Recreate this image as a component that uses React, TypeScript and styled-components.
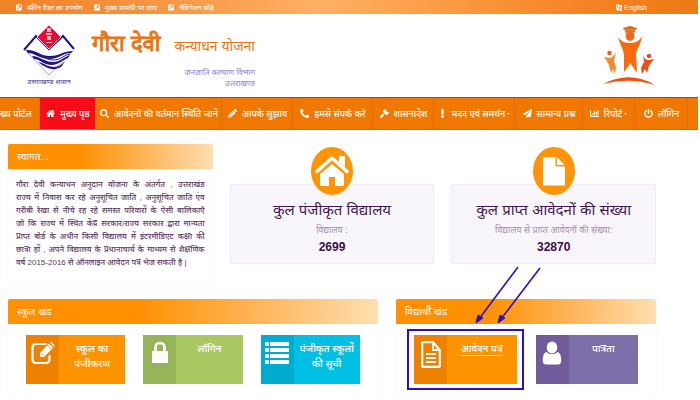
import React from "react";
import styled, { createGlobalStyle, css } from "styled-components";
import {
  FaCaretDown, FaChartBar, FaExclamation, FaExternalLinkSquareAlt, FaGavel, FaHome,
  FaPaperPlane, FaPencilAlt, FaPhoneAlt, FaPowerOff, FaSearch,
} from "react-icons/fa";

const GlobalStyle = createGlobalStyle`
  * { box-sizing: border-box; }
  body {
    margin: 0;
    background: #fff;
    color: #5b3560;
    font-family: "Liberation Sans", "Noto Sans", "Noto Sans Devanagari", sans-serif;
    font-size: 10px;
    overflow-x: hidden;
  }
  a { color: inherit; text-decoration: none; }
  h1, h2, p { margin: 0; padding: 0; font-weight: 400; }
`;

const Page = styled.div`
  margin-right: 2px;
`;

const TopBar = styled.div`
  display: flex;
  justify-content: space-between;
  align-items: center;
  height: 14px;
  padding: 0 51px 0 16px;
  color: #fff;
  font-size: 7px;
  line-height: 13px;
  background: linear-gradient(90deg, #f08228 0%, #f48a34 12%, #fdb064 46%, #fba04a 60%, #f58220 85%, #ee7a14 100%);
`;

const TopLinks = styled.div`
  display: flex;
  gap: 11px;
`;

const TopLink = styled.a`
  display: flex;
  align-items: center;
  gap: 5px;
  white-space: nowrap;
  svg { width: 6px; height: 7px; }
`;

const Language = styled(TopLink)`
  gap: 2px;
`;

const Header = styled.header`
  display: flex;
  align-items: center;
  justify-content: space-between;
  height: 83px;
  padding: 0 42px 0 20px;
`;

const Brand = styled.div`
  display: flex;
  align-items: center;
`;

const Emblem = styled.figure`
  display: flex;
  flex-direction: column;
  align-items: center;
  margin: 0;
  width: 58px;
  svg { width: 54px; height: 53px; }
`;

const EmblemCaption = styled.figcaption`
  color: #45349a;
  font-size: 7px;
  line-height: 10px;
  white-space: nowrap;
`;

const Titles = styled.div`
  display: flex;
  flex-direction: column;
  align-items: flex-end;
  margin-left: 14px;
`;

const Title = styled.h1`
  display: flex;
  align-items: baseline;
  gap: 14px;
  color: #e87516;
  font-size: 22px;
  line-height: 42px;
  white-space: nowrap;
  -webkit-text-stroke: 1px #e87516;
`;

const TitleTail = styled.span`
  font-size: 14px;
  -webkit-text-stroke: 0;
`;

const Department = styled.p`
  color: #8a80d4;
  font-size: 8px;
  line-height: 11px;
  text-align: right;
`;

const SchemeLogo = styled.svg`
  width: 54px;
  height: 62px;
`;

const Nav = styled.nav`
  display: flex;
  height: 33px;
  background: #f07800;
  border-top: 1px solid #d8320c;
  border-bottom: 1px solid #e56208;
`;

const NavItem = styled.a<{ $active?: boolean; $grow: number }>`
  display: flex;
  flex: ${(p) => p.$grow} 0 0;
  min-width: 0;
  align-items: center;
  justify-content: center;
  gap: 5px;
  color: #fff;
  font-size: 9px;
  font-weight: 500;
  white-space: nowrap;
  box-shadow: inset -1px 0 #e26a10;
  svg { flex: none; width: 9px; height: 9px; }
  ${(p) => p.$active && css`background: #f80c18;`}
`;

const PortalItem = styled(NavItem)`
  justify-content: flex-start;
`;

const NavLabel = styled.span`
  display: flex;
  align-items: center;
  gap: 1px;
  svg { width: 5px; height: 5px; }
`;

const NavTail = styled.div`
  flex: 10 0 0;
`;

const Main = styled.main`
  display: flex;
  flex-direction: column;
  gap: 18px;
  padding: 14px 42px 0 8px;
`;

const SummaryRow = styled.div`
  display: grid;
  grid-template-columns: repeat(3, minmax(0, 1fr));
  gap: 17px;
  min-height: 137px;
`;

const SectionRow = styled.div`
  display: grid;
  grid-template-columns: 37fr 26fr;
  gap: 18px;
`;

const Panel = styled.section`
  min-width: 0;
  border-radius: 2px;
  box-shadow: 0 0 1px #ddd;
`;

const PanelTitle = styled.h2`
  height: 25px;
  padding: 0 9px;
  color: #fff;
  font-size: 10px;
  line-height: 25px;
  border-radius: 2px 2px 0 0;
  background: linear-gradient(90deg, #ff9000 0%, #ff9000 35%, #ffb860 70%, #ffdfb0 100%);
`;

const WelcomeText = styled.p`
  padding: 9px 8px 10px;
  font-size: 8px;
  font-weight: 500;
  line-height: 13px;
`;

const Line = styled.span<{ $last?: boolean }>`
  display: block;
  white-space: nowrap;
  text-align: justify;
  text-align-last: ${(p) => (p.$last ? "left" : "justify")};
`;

const Stat = styled.section`
  display: flex;
  flex-direction: column;
  align-items: center;
  align-self: start;
  height: 80px;
  margin-top: 40px;
  background: #f8f6fa;
  border: 1px solid #efedf2;
`;

const StatIcon = styled.span`
  display: flex;
  flex: none;
  align-items: center;
  justify-content: center;
  width: 42px;
  height: 48px;
  margin-top: -38px;
  border-radius: 50%;
  background: #ff9408;
`;

const StatTitle = styled.h2`
  margin-top: 4px;
  color: #42164e;
  font-size: 15px;
  line-height: 22px;
  white-space: nowrap;
`;

const StatNote = styled.p`
  color: #a58fab;
  font-size: 9px;
  line-height: 18px;
  white-space: nowrap;
`;

const StatValue = styled.strong`
  color: #3c1048;
  font-size: 12px;
  line-height: 16px;
`;

const Tiles = styled.div<{ $gap: number }>`
  display: grid;
  grid-auto-flow: column;
  grid-auto-columns: minmax(0, 1fr);
  gap: ${(p) => p.$gap}px;
  padding: 11px 18px 11px;
`;

const TileCell = styled.div`
  position: relative;
`;

const Tile = styled.a<{ $bg: string; $side: string }>`
  display: flex;
  height: 49px;
  color: #fff;
  background: ${(p) => p.$bg};
  > span:first-child { background: ${(p) => p.$side}; }
`;

const TileIcon = styled.span`
  display: flex;
  flex: none;
  justify-content: center;
  align-items: flex-start;
  width: 33px;
  padding-top: 6px;
`;

const TileLabel = styled.span<{ $underline?: boolean }>`
  flex: 1;
  padding-top: 6px;
  font-size: 10px;
  font-weight: 500;
  line-height: 15px;
  text-align: center;
  white-space: nowrap;
  text-decoration: ${(p) => (p.$underline ? "underline" : "none")};
  text-underline-offset: 3px;
`;

const Highlight = styled.span`
  position: absolute;
  inset: -6px -7px;
  border: 2px solid #2a10c8;
  pointer-events: none;
`;

const Arrows = styled.svg`
  position: absolute;
  left: 60px;
  top: -70px;
  width: 70px;
  height: 60px;
  pointer-events: none;
`;

function StateEmblem() {
  return (
    <Emblem>
      <svg viewBox="0 0 54 53" aria-hidden="true">
        <path d="M4 27 27 51 51 27" fill="none" stroke="#aaa0d8" strokeWidth="1" />
        <path d="M2 26 14 12 27 25 41 12 52 25" fill="none" stroke="#231580" strokeWidth="2" />
        <path d="M27 1 39 13 27 25 15 13Z" fill="#e80c34" stroke="#fff" strokeWidth="0.8" />
        <path d="M25 4h4v4h-4zM24 9h6v2h-6zM25 12h4v4h-4zM24 18h6v1h-6z" fill="#ffb5bd" />
        <path d="M4 26C14 25 18 32 28 32 38 32 41 27 51 27L49 29C40 29 38 35 27 35 16 34 13 29 6 29Z" fill="#231580" />
        <path d="M10 32C18 32 22 38 31 38 38 38 42 33 48 31L46 34C40 36 37 41 29 41 20 40 18 35 12 35Z" fill="#231580" />
        <path d="M16 38C23 39 25 43 32 43 37 43 40 40 43 37L40 42C35 46 29 46 24 43 21 42 19 40 16 38Z" fill="#231580" />
        <path d="M14 30C22 32 24 36 31 36 39 36 42 31 48 30" fill="none" stroke="#231580" strokeWidth="1" />
      </svg>
      <EmblemCaption>उत्तराखण्ड शासन</EmblemCaption>
    </Emblem>
  );
}

function GraduatesLogo() {
  return (
    <SchemeLogo viewBox="0 0 54 62" role="img" aria-label="Graduates">
      <path d="M21 3 28 1 35 3 34 5 28 4 22 5Z" fill="#d96a18" />
      <path d="M23 5Q28 3 33 5V8Q28 6 23 8Z" fill="#e07826" />
      <ellipse cx="28" cy="11" rx="4.4" ry="5" fill="#f4681a" />
      <path d="M16 12C19 17 24 18 28 18 32 18 37 17 40 11 39 20 35 23 34 29L35 48 31 42 28 38 26 42 22 47 22 30C21 23 18 20 16 12Z" fill="#fa6a0c" />
      <circle cx="7.5" cy="28" r="2.2" fill="#f05a14" />
      <path d="M2 32 8 33Q12 32 14 27L12 36 14 42 13 49 11 44 9 48 7 40Q5 36 2 32Z" fill="#f58a30" />
      <circle cx="47" cy="31" r="2.2" fill="#e8481c" />
      <path d="M41 29Q42 35 47 35L52 34Q49 38 47 41L45 48 43 44 40 49 39 43 42 37Z" fill="#ec5018" />
      <path d="M1 59Q28 45 53 60 28 52 1 59Z" fill="#f0500f" />
    </SchemeLogo>
  );
}

function LanguageIcon() {
  return (
    <svg viewBox="0 0 12 14" aria-hidden="true">
      <path d="M0 1 6 0V13L0 12ZM7 2h5v12l-5-1Z" fill="#fff" />
      <path d="M1.500 4h3M3 4v2L1.500 9M3 6 4.500 9M8 10l1.500-5L11 10" stroke="#e8842c" fill="none" />
    </svg>
  );
}

function HouseIcon() {
  return (
    <svg width="38" height="36" viewBox="0 0 38 36" aria-hidden="true">
      <path d="M7 21 19 11 31 21V32a1 1 0 0 1-1 1h-8v-9h-6v9H8a1 1 0 0 1-1-1Z" fill="#fff" />
      <path d="M4 19 19 5.500 34 19" fill="none" stroke="#ff9408" strokeWidth="6" />
      <path d="M4 18.500 19 5 34 18.500" fill="none" stroke="#fff" strokeWidth="3.500" strokeLinecap="round" strokeLinejoin="round" />
      <path d="M26 3h6v11l-6-5z" fill="#fff" />
    </svg>
  );
}

function PageIcon() {
  return (
    <svg width="22" height="30" viewBox="0 0 22 30" aria-hidden="true">
      <path d="M0 2a1 1 0 0 1 1-1h11.500v9.500H22v18a1 1 0 0 1-1 1H1a1 1 0 0 1-1-1Z" fill="#fff" />
      <path d="M14 1 21.500 9H14Z" fill="#fff" />
    </svg>
  );
}

function EditIcon() {
  return (
    <svg width="24" height="24" viewBox="0 0 24 24" fill="none" aria-hidden="true">
      <path d="M15 3H5Q1.500 3 1.500 7v11q0 4 3.500 4h10q3.500 0 3.500-4v-3" stroke="#fff" strokeWidth="2.2" strokeLinecap="round" />
      <path d="M9 12 18 2.500 22 7 13 16H9Z" fill="#fff" />
      <path d="M19 1.500Q20 .5 21 1.500L23 4Q24 5 23 6Z" fill="#fff" />
      <path d="M16.500 4 20.500 8.500M10.500 12.500 12.500 14.800" stroke="#ee8200" strokeWidth="0.8" />
    </svg>
  );
}

function LockIcon() {
  return (
    <svg width="16" height="22" viewBox="0 0 16 22" aria-hidden="true">
      <path d="M3.500 11V6.500Q3.500 2 8 2t4.500 4.500V11" fill="none" stroke="#fff" strokeWidth="2.600" />
      <rect y="10" width="16" height="12" rx="1" fill="#fff" />
    </svg>
  );
}

function ListIcon() {
  return (
    <svg width="24" height="23" viewBox="0 0 24 23" fill="#fff" aria-hidden="true">
      {[1, 7, 13, 19].map((y) => (
        <g key={y}>
          <rect y={y} width="4" height="4" rx="1" />
          <rect x="5" y={y} width="19" height="4" rx="0.5" />
        </g>
      ))}
    </svg>
  );
}

function DocumentIcon() {
  return (
    <svg width="20" height="27" viewBox="0 0 20 27" fill="none" stroke="#fff" aria-hidden="true">
      <path d="M2 1.200h10L18.800 9v16q0 .8-.8.8H2q-.8 0-.8-.8V2q0-.8.8-.8Z" strokeWidth="2.200" />
      <path d="M12 1.500V9h6.500" strokeWidth="1.800" />
      <path d="M5 13h10M5 17h10M5 21h10" strokeWidth="2" />
    </svg>
  );
}

function PersonIcon() {
  return (
    <svg width="20" height="24" viewBox="0 0 20 24" fill="#fff" aria-hidden="true">
      <path d="M4.500 11C1 12 .8 17 .8 20c0 2 1 3.500 3.500 3.500h11.400c2.500 0 3.500-1.500 3.500-3.500 0-3-.2-8-3.700-9-3 3-8 3-11 0Z" />
      <ellipse cx="10" cy="6.500" rx="5.300" ry="6" />
    </svg>
  );
}

const navItems = [
  { icon: <FaHome />, label: "मुख्य पृष्ठ", grow: 56, active: true },
  { icon: <FaSearch />, label: "आवेदनों की वर्तमान स्थिति जाने", grow: 126 },
  { icon: <FaPencilAlt />, label: "आपके सुझाव", grow: 71 },
  { icon: <FaPhoneAlt />, label: "हमसे संपर्क करें", grow: 80 },
  { icon: <FaGavel />, label: "शासनादेश", grow: 61 },
  { icon: <FaExclamation />, label: "मदद एवं समर्थन", grow: 81, menu: true },
  { icon: <FaPaperPlane />, label: "सामान्य प्रश्न", grow: 68 },
  { icon: <FaChartBar />, label: "रिपोर्ट", grow: 52, menu: true },
  { icon: <FaPowerOff />, label: "लॉगिन", grow: 53 },
];

const welcomeLines = [
  "गौरा देवी कन्याधन अनुदान योजना के अंतर्गत , उत्तराखंड",
  "राज्य में निवास कर रहे अनुसूचित जाति , अनुसूचित जाति एंव",
  "गरीबी रेखा से नीचे रह रहे समस्त परिवारों के ऐसी बालिकाएँ",
  "जो कि राज्य में स्थित केंद्र सरकार/राज्य सरकार द्वारा मान्यता",
  "प्राप्त बोर्ड के अधीन किसी विद्यालय में इंटरमीडिएट कक्षा की",
  "छात्रा हों , अपने विद्यालय के प्रधानाचार्य के माध्यम से शैक्षणिक",
  "वर्ष 2015-2016 से ऑनलाइन आवेदन पत्र भेज सकती है |",
];

export default function App() {
  return (
    <>
      <GlobalStyle />
      <Page>
        <TopBar>
          <TopLinks>
            {["स्क्रीन रीडर का उपयोग", "मुख्य सामग्री पर जाएं", "नेविगेशन छोड़े"].map((t) => (
              <TopLink href="#" key={t}><FaExternalLinkSquareAlt />{t}</TopLink>
            ))}
          </TopLinks>
          <Language href="#"><LanguageIcon />English</Language>
        </TopBar>
        <Header>
          <Brand>
            <StateEmblem />
            <Titles>
              <Title>गौरा देवी <TitleTail>कन्याधन योजना</TitleTail></Title>
              <Department>जनजाति कल्याण विभाग<br />उत्तराखण्ड</Department>
            </Titles>
          </Brand>
          <GraduatesLogo />
        </Header>
        <Nav>
          <PortalItem href="#" $grow={40}><NavLabel>ख्य पोर्टल</NavLabel></PortalItem>
          {navItems.map((n) => (
            <NavItem href="#" key={n.label} $grow={n.grow} $active={n.active}>
              {n.icon}
              <NavLabel>{n.label}{n.menu && <FaCaretDown />}</NavLabel>
            </NavItem>
          ))}
          <NavTail />
        </Nav>
        <Main>
          <SummaryRow>
            <Panel>
              <PanelTitle>स्वागत...</PanelTitle>
              <WelcomeText>
                {welcomeLines.map((l, i) => (
                  <Line key={l} $last={i === welcomeLines.length - 1}>{l} </Line>
                ))}
              </WelcomeText>
            </Panel>
            <Stat>
              <StatIcon><HouseIcon /></StatIcon>
              <StatTitle>कुल पंजीकृत विद्यालय</StatTitle>
              <StatNote>विद्यालय :</StatNote>
              <StatValue>2699</StatValue>
            </Stat>
            <Stat>
              <StatIcon><PageIcon /></StatIcon>
              <StatTitle>कुल प्राप्त आवेदनों की संख्या</StatTitle>
              <StatNote>विद्यालय से प्राप्त आवेदनों की संख्या:</StatNote>
              <StatValue>32870</StatValue>
            </Stat>
          </SummaryRow>
          <SectionRow>
            <Panel>
              <PanelTitle>स्कूल खंड</PanelTitle>
              <Tiles $gap={18}>
                <Tile href="#" $bg="#ff9400" $side="#ee8200">
                  <TileIcon><EditIcon /></TileIcon>
                  <TileLabel>स्कूल का<br />पंजीकरण</TileLabel>
                </Tile>
                <Tile href="#" $bg="#a9c862" $side="#98b458">
                  <TileIcon><LockIcon /></TileIcon>
                  <TileLabel>लॉगिन</TileLabel>
                </Tile>
                <Tile href="#" $bg="#00bfe4" $side="#00abd0">
                  <TileIcon><ListIcon /></TileIcon>
                  <TileLabel>पंजीकृत स्कूलों<br />की सूची</TileLabel>
                </Tile>
              </Tiles>
            </Panel>
            <Panel>
              <PanelTitle>विद्यार्थी खंड</PanelTitle>
              <Tiles $gap={19}>
                <TileCell>
                  <Tile href="#" $bg="#ff9400" $side="#ee8200">
                    <TileIcon><DocumentIcon /></TileIcon>
                    <TileLabel $underline>आवेदन पत्र</TileLabel>
                  </Tile>
                  <Highlight />
                  <Arrows viewBox="0 0 70 60" aria-hidden="true">
                    <path d="M44 2 5 54M66 3 27 54" stroke="#2a10c8" strokeWidth="1.6" fill="none" />
                    <path d="M2 58 4 50 9 53ZM24 58 26 50 31 53Z" fill="#2a10c8" stroke="#2a10c8" />
                  </Arrows>
                </TileCell>
                <Tile href="#" $bg="#7c6ea8" $side="#705c9a">
                  <TileIcon><PersonIcon /></TileIcon>
                  <TileLabel>पात्रता</TileLabel>
                </Tile>
              </Tiles>
            </Panel>
          </SectionRow>
        </Main>
      </Page>
    </>
  );
}
